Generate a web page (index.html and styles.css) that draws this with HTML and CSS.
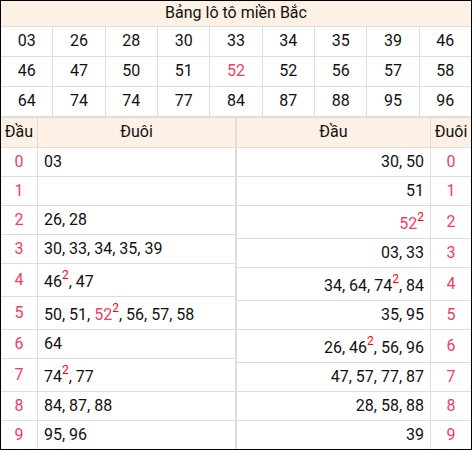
FILE: index.html
```html
<!DOCTYPE html>
<html lang="vi">
<head>
    <meta charset="UTF-8">
    <meta name="viewport" content="width=device-width, initial-scale=1.0">
    <title>Bảng lô tô miền Bắc</title>
    <link rel="stylesheet" href="styles.css">
</head>
<body>
    <div class="board">
        <table class="lo-grid">
            <tr><th colspan="9" class="title">Bảng lô tô miền Bắc</th></tr>
            <tr>
                <td>03</td><td>26</td><td>28</td><td>30</td><td>33</td><td>34</td><td>35</td><td>39</td><td>46</td>
            </tr>
            <tr>
                <td>46</td><td>47</td><td>50</td><td>51</td><td class="hot">52</td><td>52</td><td>56</td><td>57</td><td>58</td>
            </tr>
            <tr>
                <td>64</td><td>74</td><td>74</td><td>77</td><td>84</td><td>87</td><td>88</td><td>95</td><td>96</td>
            </tr>
        </table>

        <div class="split">
            <!-- Đầu -> Đuôi -->
            <table class="dd dd-left">
                <tr><th class="key">Đầu</th><th>Đuôi</th></tr>
                <tr><td class="key">0</td><td class="list">03</td></tr>
                <tr><td class="key">1</td><td class="list"></td></tr>
                <tr><td class="key">2</td><td class="list">26, 28</td></tr>
                <tr><td class="key">3</td><td class="list">30, 33, 34, 35, 39</td></tr>
                <tr><td class="key">4</td><td class="list">46<sup>2</sup>, 47</td></tr>
                <tr><td class="key">5</td><td class="list">50, 51, <span class="hot">52</span><sup>2</sup>, 56, 57, 58</td></tr>
                <tr><td class="key">6</td><td class="list">64</td></tr>
                <tr><td class="key">7</td><td class="list">74<sup>2</sup>, 77</td></tr>
                <tr><td class="key">8</td><td class="list">84, 87, 88</td></tr>
                <tr><td class="key">9</td><td class="list">95, 96</td></tr>
            </table>

            <!-- Đuôi -> Đầu -->
            <table class="dd dd-right">
                <tr><th>Đầu</th><th class="key">Đuôi</th></tr>
                <tr><td class="list">30, 50</td><td class="key">0</td></tr>
                <tr><td class="list">51</td><td class="key">1</td></tr>
                <tr><td class="list"><span class="hot">52</span><sup>2</sup></td><td class="key">2</td></tr>
                <tr><td class="list">03, 33</td><td class="key">3</td></tr>
                <tr><td class="list">34, 64, 74<sup>2</sup>, 84</td><td class="key">4</td></tr>
                <tr><td class="list">35, 95</td><td class="key">5</td></tr>
                <tr><td class="list">26, 46<sup>2</sup>, 56, 96</td><td class="key">6</td></tr>
                <tr><td class="list">47, 57, 77, 87</td><td class="key">7</td></tr>
                <tr><td class="list">28, 58, 88</td><td class="key">8</td></tr>
                <tr><td class="list">39</td><td class="key">9</td></tr>
            </table>
        </div>
    </div>
</body>
</html>
```

FILE: styles.css
```css
body {
    margin: 0;
    font-family: Roboto, "Liberation Sans", Arial, sans-serif;
    font-size: 16px;
    color: #111;
    background: #fff;
}
.board {
    width: 472px;
    height: 450px;
    overflow: hidden;
    outline: 1px solid #000;
    outline-offset: -1px;
}
table {
    border-collapse: collapse;
    table-layout: fixed;
}
th, td {
    border: 1px solid #ddd;
    line-height: 20px;
    font-weight: normal;
}
th {
    background-color: #fdf1e6;
}

/* top grid */
.lo-grid {
    width: 472px;
}
.lo-grid .title {
    padding: 2px 0 3px;
    text-align: center;
}
.lo-grid td {
    padding: 4px 0 5px;
    text-align: center;
}
.hot {
    color: #f23d5c;
}

/* đầu / đuôi tables */
.split {
    display: flex;
    align-items: flex-start;
}
.dd {
    width: 236px;
}
.dd th {
    padding: 4px 0 5px;
    text-align: center;
}
.dd td {
    padding: 4px 6px;
}
.dd td.key {
    color: #f23d5c;
    text-align: center;
    padding: 4px 0;
}
.dd-left th.key {
    width: 36px;
}
.dd-right th.key {
    width: 40px;
}
.dd-left .list {
    text-align: left;
}
.dd-right .list {
    text-align: right;
}
sup {
    color: #f00;
    font-size: 12px;
    line-height: 15px;
    vertical-align: 8px;
}
```
